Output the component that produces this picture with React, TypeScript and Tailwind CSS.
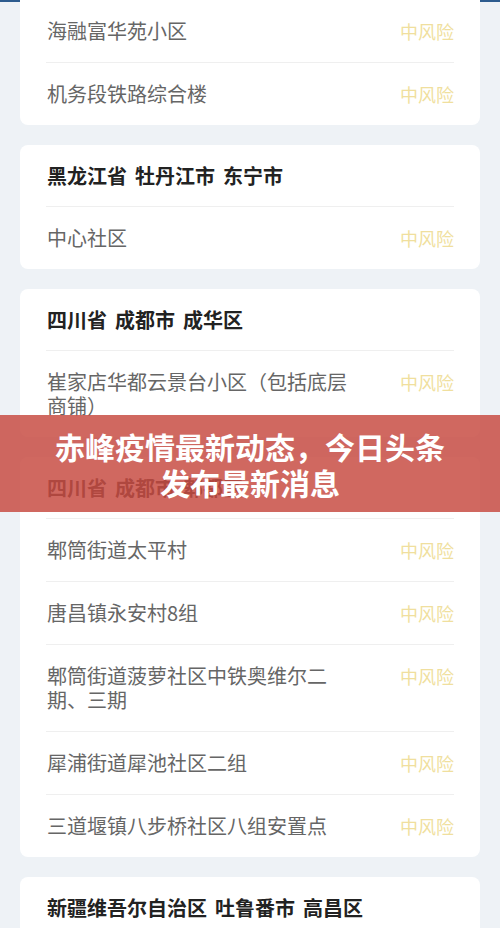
const font = { fontFamily: '"Noto Sans CJK SC", "Noto Sans", sans-serif' };

type Card = { title?: string[]; rows: string[]; clipped?: boolean };

const cards: Card[] = [
  { clipped: true, rows: ["海融富华苑小区", "机务段铁路综合楼"] },
  { title: ["黑龙江省", "牡丹江市", "东宁市"], rows: ["中心社区"] },
  { title: ["四川省", "成都市", "成华区"], rows: ["崔家店华都云景台小区（包括底层商铺）"] },
  {
    title: ["四川省", "成都市", "郫都区"],
    rows: [
      "郫筒街道太平村",
      "唐昌镇永安村8组",
      "郫筒街道菠萝社区中铁奥维尔二期、三期",
      "犀浦街道犀池社区二组",
      "三道堰镇八步桥社区八组安置点",
    ],
  },
  { title: ["新疆维吾尔自治区", "吐鲁番市", "高昌区"], rows: ["高昌路街道"] },
];

function RiskCard({ card }: { card: Card }) {
  return (
    <div
      className={`bg-white px-[26px] ${card.clipped ? "rounded-b-lg" : "rounded-lg"}`}
    >
      {card.title && (
        <div className="flex gap-2 pl-px pt-[19px] pb-[18px] text-[20px] font-bold leading-[24px] text-[#222]">
          {card.title.map((t) => (
            <span key={t}>{t}</span>
          ))}
        </div>
      )}
      {card.rows.map((r, i) => (
        <div
          key={r}
          className={`flex items-start justify-between py-[19px] ${
            i === 0 && card.clipped ? "" : "border-t border-[#efefef]"
          }`}
        >
          <div className="w-[312px] pl-px text-[20px] leading-[24px] text-[#666]">{r}</div>
          <div className="text-[18px] leading-[24px] text-[#f0df9e]">中风险</div>
        </div>
      ))}
    </div>
  );
}

export default function App() {
  return (
    <div className="relative h-[928px] w-[500px] overflow-hidden bg-[#eef2f6]" style={font}>
      <div className="h-[2px] bg-[#2d5b8e]" />
      <div className="-mt-[2px] flex flex-col gap-5 px-5">
        {cards.map((c, i) => (
          <RiskCard key={i} card={c} />
        ))}
      </div>
      <div className="absolute left-0 right-0 top-[415px] flex h-[97px] items-center justify-center bg-[#c84e44]/85">
        <h1 className="max-w-[404px] text-center text-[30px] font-bold leading-[36px] text-white">
          赤峰疫情最新动态，今日头条发布最新消息
        </h1>
      </div>
    </div>
  );
}
